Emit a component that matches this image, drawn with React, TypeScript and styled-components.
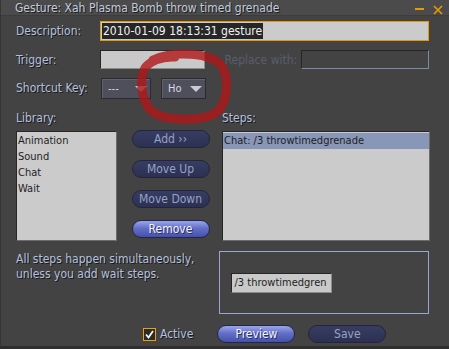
import React from "react";
import styled, { createGlobalStyle, css } from "styled-components";

const Global = createGlobalStyle`
  html, body { margin: 0; padding: 0; background: #434343; }
  body {
    width: 449px; height: 349px; overflow: hidden;
    font-family: "DejaVu Sans Condensed", "DejaVu Sans", "Liberation Sans", sans-serif;
    font-stretch: condensed;
  }
`;

const Window = styled.div`
  position: relative;
  width: 449px;
  height: 349px;
  box-sizing: border-box;
  background: #434343;
  border-left: 1px solid #363636;
  border-bottom: 3px solid #2e2e2e;
  display: flex;
  flex-direction: column;
  overflow: hidden;
`;

const TitleBar = styled.div`
  height: 15px;
  background: #4b4b4b;
  border-bottom: 1px solid #3c3c3c;
  display: flex;
  align-items: center;
  padding-left: 14px;
  padding-right: 6px;
`;

const Title = styled.div`
  flex: 1;
  color: #c3cbdc;
  font-size: 12px;
  text-shadow: 1px 1px 0 #1e1e1e;
  white-space: nowrap;
`;

const Controls = styled.div`
  display: flex;
  align-items: center;
  gap: 9px;
  padding-top: 4px;
`;

const Body = styled.div`
  display: flex;
  flex-direction: column;
  padding: 5px 20px 0 15px;
`;

const Row = styled.div<{ $mt?: number; $h?: number }>`
  display: flex;
  align-items: center;
  margin-top: ${(p) => p.$mt ?? 0}px;
  height: ${(p) => p.$h ?? 20}px;
`;

const Label = styled.span<{ $w?: number; $disabled?: boolean }>`
  width: ${(p) => (p.$w ? `${p.$w}px` : "auto")};
  flex-shrink: 0;
  font-size: 12px;
  color: ${(p) => (p.$disabled ? "#5a5d6c" : "#b5c0dd")};
  text-shadow: ${(p) => (p.$disabled ? "none" : "1px 1px 0 #1a1a1a")};
  white-space: nowrap;
`;

const DescInput = styled.div`
  flex: 1;
  height: 20px;
  box-sizing: border-box;
  border: 1px solid #e89a00;
  background: #cbcbcb;
  display: flex;
  align-items: center;
  padding-left: 1px;
`;

const Selected = styled.span`
  background: #262626;
  color: #f2f2f2;
  font-size: 12px;
  line-height: 16px;
  padding: 0 1px;
`;

const TextField = styled.div<{ $w: number; $dark?: boolean }>`
  width: ${(p) => p.$w}px;
  height: 19px;
  box-sizing: border-box;
  background: ${(p) => (p.$dark ? "#434343" : "#c9c9c9")};
  border-top: 1px solid #262626;
  border-left: 1px solid #262626;
  border-right: 1px solid ${(p) => (p.$dark ? "#7d8aa0" : "#8c8c8c")};
  border-bottom: 1px solid ${(p) => (p.$dark ? "#7d8aa0" : "#8c8c8c")};
  display: flex;
  align-items: center;
  padding-left: 2px;
  font-size: 11px;
  color: #1e1e1e;
`;

const Dropdown = styled.div<{ $w: number }>`
  width: ${(p) => p.$w}px;
  height: 21px;
  box-sizing: border-box;
  background: #4f4f5c;
  border: 1px solid #2a2a30;
  box-shadow: inset 1px 1px 0 #62626f;
  display: flex;
  align-items: center;
  justify-content: space-between;
  padding: 0 3px 0 6px;
  font-size: 11px;
  color: #d6d8e4;
  margin-right: 10px;
`;

const Arrow = styled.span`
  width: 0;
  height: 0;
  border-left: 6px solid transparent;
  border-right: 6px solid transparent;
  border-top: 6px solid #c9cad6;
  margin-top: 1px;
`;

const Columns = styled.div`
  display: grid;
  grid-template-columns: 101px 105px 208px;
  margin-top: 12px;
`;

const Column = styled.div`
  display: flex;
  flex-direction: column;
`;

const ListBox = styled.div`
  margin-top: 6px;
  height: 110px;
  box-sizing: border-box;
  background: #cbcbcb;
  border-top: 1px solid #262626;
  border-left: 1px solid #262626;
  border-right: 1px solid #6c6c6c;
  border-bottom: 1px solid #6c6c6c;
  padding-top: 1px;
`;

const ListItem = styled.div<{ $sel?: boolean }>`
  height: 16px;
  line-height: 16px;
  padding-left: 1px;
  font-size: 11px;
  color: #1e1e1e;
  background: ${(p) => (p.$sel ? "#8896b8" : "transparent")};
`;

const ButtonCol = styled.div`
  display: flex;
  flex-direction: column;
  align-items: center;
  gap: 12px;
  padding-top: 19px;
  padding-left: 2px;
`;

const Btn = styled.div<{ $active?: boolean; $w?: number }>`
  width: ${(p) => p.$w ?? 78}px;
  height: 18px;
  box-sizing: border-box;
  border-radius: 9px;
  display: flex;
  align-items: center;
  justify-content: center;
  font-size: 12px;
  ${(p) =>
    p.$active
      ? css`
          background: linear-gradient(#9aa6ea, #6470c8 45%, #4552a8);
          border: 1px solid #22264a;
          color: #f4f4ff;
          text-shadow: 1px 1px 0 #2a2f60;
        `
      : css`
          background: linear-gradient(#373d62, #2c3152);
          border: 1px solid #23263a;
          color: #97a1c6;
        `}
`;

const Bottom = styled.div`
  display: flex;
  margin-top: 9px;
`;

const Note = styled.div`
  width: 204px;
  padding-top: 2px;
  font-size: 12px;
  line-height: 15px;
  color: #b5c0dd;
  text-shadow: 1px 1px 0 #1a1a1a;
`;

const Frame = styled.div`
  width: 210px;
  height: 63px;
  margin-top: 1px;
  box-sizing: border-box;
  border: 1px solid #9aa6cf;
  display: flex;
  align-items: center;
  padding-left: 11px;
`;

const SmallField = styled.div`
  width: 101px;
  height: 20px;
  box-sizing: border-box;
  background: #c9c9c9;
  border: 1px solid #262626;
  border-right-color: #8c8c8c;
  border-bottom-color: #8c8c8c;
  display: flex;
  align-items: center;
  padding-left: 2px;
  font-size: 11px;
  color: #1e1e1e;
  overflow: hidden;
  white-space: nowrap;
`;

const Footer = styled.div`
  display: flex;
  align-items: center;
  margin-top: 11px;
  padding-left: 127px;
`;

const CheckBox = styled.span`
  width: 13px;
  height: 13px;
  box-sizing: border-box;
  border: 1px solid #f0a000;
  background: #2a2a2a;
  display: flex;
  align-items: center;
  justify-content: center;
`;

const CheckLabel = styled.span`
  margin-left: 4px;
  margin-right: 24px;
  font-size: 12px;
  color: #b5c0dd;
  text-shadow: 1px 1px 0 #1a1a1a;
`;

const Spacer = styled.span<{ $w: number }>`
  width: ${(p) => p.$w}px;
  flex-shrink: 0;
`;

const Annotation = styled.svg`
  position: absolute;
  left: 130px;
  top: 48px;
  pointer-events: none;
`;

export default function App() {
  return (
    <>
      <Global />
      <Window>
        <TitleBar>
          <Title>Gesture: Xah Plasma Bomb throw timed grenade</Title>
          <Controls>
            <svg width="9" height="3" viewBox="0 0 9 3">
              <rect x="0" y="0" width="9" height="2" fill="#e89a00" />
            </svg>
            <svg width="10" height="10" viewBox="0 0 10 10">
              <path d="M1 1 L9 9 M9 1 L1 9" stroke="#e89a00" strokeWidth="1.6" />
            </svg>
          </Controls>
        </TitleBar>
        <Body>
          <Row $h={20}>
            <Label $w={84}>Description:</Label>
            <DescInput>
              <Selected>2010-01-09 18:13:31 gesture</Selected>
            </DescInput>
          </Row>
          <Row $mt={9} $h={19}>
            <Label $w={84}>Trigger:</Label>
            <TextField $w={105} />
            <Spacer $w={20} />
            <Label $w={76} $disabled>
              Replace with:
            </Label>
            <TextField $w={129} $dark />
          </Row>
          <Row $mt={8} $h={22}>
            <Label $w={85}>Shortcut Key:</Label>
            <Dropdown $w={50}>
              ---
              <Arrow />
            </Dropdown>
            <Dropdown $w={45}>
              Ho
              <Arrow />
            </Dropdown>
          </Row>
          <Columns>
            <Column>
              <Label>Library:</Label>
              <ListBox>
                <ListItem>Animation</ListItem>
                <ListItem>Sound</ListItem>
                <ListItem>Chat</ListItem>
                <ListItem>Wait</ListItem>
              </ListBox>
            </Column>
            <ButtonCol>
              <Btn>Add ››</Btn>
              <Btn>Move Up</Btn>
              <Btn>Move Down</Btn>
              <Btn $active>Remove</Btn>
            </ButtonCol>
            <Column>
              <Label>Steps:</Label>
              <ListBox>
                <ListItem $sel>Chat: /3 throwtimedgrenade</ListItem>
              </ListBox>
            </Column>
          </Columns>
          <Bottom>
            <Note>
              All steps happen simultaneously,
              <br />
              unless you add wait steps.
            </Note>
            <Frame>
              <SmallField>/3 throwtimedgren</SmallField>
            </Frame>
          </Bottom>
          <Footer>
            <CheckBox>
              <svg width="9" height="9" viewBox="0 0 9 9">
                <path d="M1 4.5 L3.5 7.5 L8 1" stroke="#f4f4f4" strokeWidth="1.8" fill="none" />
              </svg>
            </CheckBox>
            <CheckLabel>Active</CheckLabel>
            <Btn $active>Preview</Btn>
            <Spacer $w={13} />
            <Btn>Save</Btn>
          </Footer>
        </Body>
        <Annotation width="104" height="80" viewBox="0 0 104 80">
          <path
            d="M22 12 C40 3 82 3 92 20 C98 32 96 52 88 62 C76 74 36 74 22 64 C10 56 8 30 14 20 C18 14 30 8 44 9"
            fill="none"
            stroke="rgba(175,22,24,0.8)"
            strokeWidth="9"
            strokeLinecap="round"
          />
        </Annotation>
      </Window>
    </>
  );
}
